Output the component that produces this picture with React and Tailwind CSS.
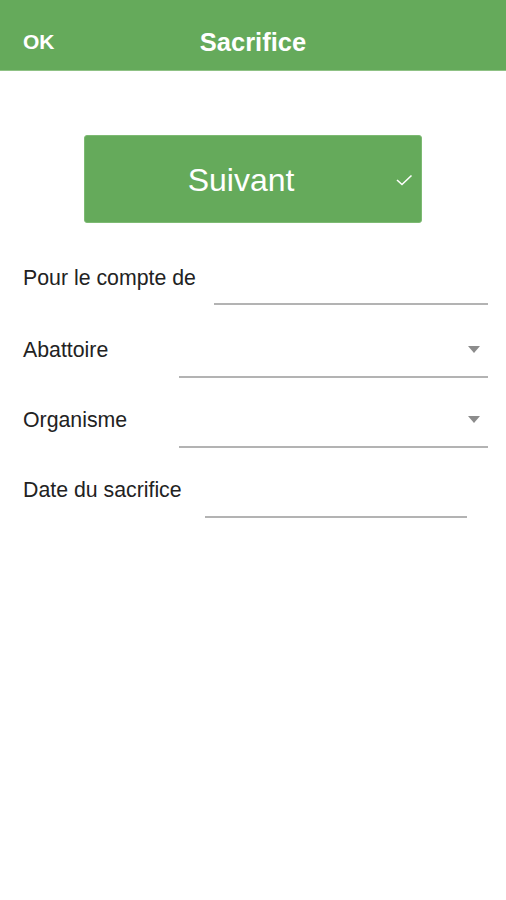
const Arrow = () => (
    <svg className="absolute right-[8px] top-[8px]" width="12" height="8" viewBox="0 0 12 8">
        <path d="M0 0 L12 0 L6 7 Z" fill="#8c8c8c" />
    </svg>
);

const App = () => {
    return (
        <div className="w-[506px] h-[900px] bg-white" style={{ fontFamily: '"Liberation Sans", Arial, sans-serif' }}>
            {/* Header */}
            <header className="h-[71px] bg-[#65aa5b] border-b border-[#8fc285] flex items-center relative text-white pt-[14px]">
                <span className="ml-[23px] text-[21px] font-bold">OK</span>
                <span className="absolute left-0 right-0 text-center text-[25.5px] font-bold pointer-events-none">Sacrifice</span>
            </header>

            {/* Suivant button */}
            <div className="pt-[64px] flex justify-center">
                <button className="relative w-[338px] h-[88px] bg-[#65aa5b] rounded-[3px] text-white text-[32px] flex items-center justify-center border border-[#7dba73]">
                    <span className="-ml-[24px] mt-[2px]">Suivant</span>
                    <svg className="absolute right-[8px] top-[38px]" width="17" height="12" viewBox="0 0 17 12">
                        <path d="M1 6 L6 10.5 L15.5 1.5" stroke="white" strokeWidth="1.6" fill="none" />
                    </svg>
                </button>
            </div>

            {/* Form */}
            <div className="mt-[12px] text-[21.3px] text-[#222]">
                <div className="flex items-end h-[70px]">
                    <div className="w-[23px] shrink-0" />
                    <span className="leading-none pb-[16px] whitespace-nowrap w-[191px]">Pour le compte de</span>
                    <div className="border-b-[2px] border-[#b3b3b3] w-[274px] h-[40px]" />
                </div>
                <div className="flex items-end h-[73px]">
                    <div className="w-[23px] shrink-0" />
                    <span className="leading-none pb-[17px] whitespace-nowrap w-[156px]">Abattoire</span>
                    <div className="relative border-b-[2px] border-[#b3b3b3] w-[309px] h-[40px]">
                        <Arrow />
                    </div>
                </div>
                <div className="flex items-end h-[70px]">
                    <div className="w-[23px] shrink-0" />
                    <span className="leading-none pb-[17px] whitespace-nowrap w-[156px]">Organisme</span>
                    <div className="relative border-b-[2px] border-[#b3b3b3] w-[309px] h-[40px]">
                        <Arrow />
                    </div>
                </div>
                <div className="flex items-end h-[70px]">
                    <div className="w-[23px] shrink-0" />
                    <span className="leading-none pb-[17px] whitespace-nowrap w-[182px]">Date du sacrifice</span>
                    <div className="border-b-[2px] border-[#b3b3b3] w-[262px] h-[40px]" />
                </div>
            </div>
        </div>
    );
};

export default App;
